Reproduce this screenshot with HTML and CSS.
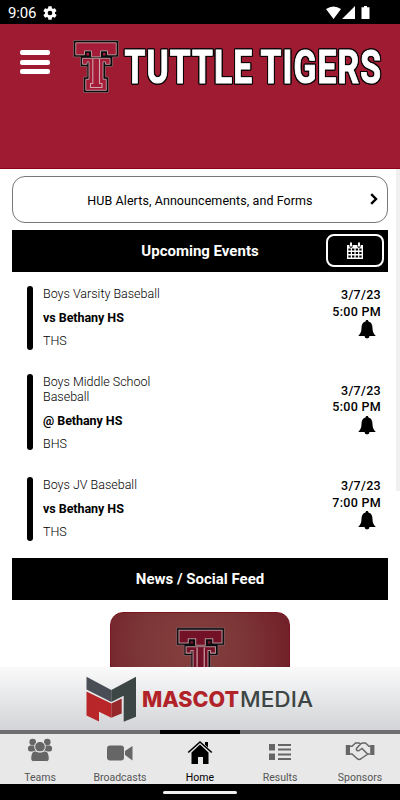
FILE: index.html
```html
<!DOCTYPE html>
<html lang="en">
<head>
<meta charset="utf-8">
<title>Tuttle Tigers</title>
<link rel="stylesheet" href="styles.css">
</head>
<body>
<svg class="defs" width="0" height="0" aria-hidden="true">
  <symbol id="tt" viewBox="0 0 46 53">
    <path d="M.5.5h45v16.500h-6v9.500h-7v10.500h3v15.500h-25v-15.500H14v-10.500H7.500V17h-7z" fill="#080c0e" stroke="#7d5055" stroke-width="1"/>
    <path d="M2.800 2.800h40.400v12h-8.700v-4h-7v6h-9v-6h-7v4H2.800z" fill="currentColor" stroke="#b98f95" stroke-width="1"/>
    <path d="M13.500 13h2.500v2.500h-2.500zM30 13h2.500v2.500H30z" fill="currentColor"/>
    <path d="M9.500 18.300h27.500v6h-4.500v-2.500H30v17.500h3.300v11H12.800v-11H16V21.800h-2v2.500H9.500z" fill="currentColor" stroke="#b98f95" stroke-width="1"/>
    <path d="M19.800 19v24.500H17.500v4h11.500v-4h-2.500V19" fill="currentColor" stroke="#d0a5ac" stroke-width="1.100"/>
  </symbol>
  <symbol id="bell" viewBox="0 0 18 19">
    <path d="M9 0c1 0 1.500.6 1.400 1.500C13.300 2.200 14.500 4.600 14.500 8c0 4 1 5.600 3.300 8H.2C2.500 13.600 3.500 12 3.500 8c0-3.400 1.200-5.800 4.100-6.500C7.500.6 8 0 9 0zM6.500 16h5a2.500 2.500 0 0 1-5 0z"/>
  </symbol>
</svg>

<div class="status">
  <span class="clock">9:06</span>
  <svg class="gear" viewBox="0 0 24 24" width="16" height="16"><path fill="#fff" fill-rule="evenodd" d="M19.400 13a7.500 7.500 0 0 0 0-2l2.100-1.700a.5.5 0 0 0 .1-.6l-2-3.500a.5.5 0 0 0-.6-.2l-2.500 1a7.300 7.300 0 0 0-1.700-1L14.500 2.400a.5.500 0 0 0-.5-.4h-4a.5.5 0 0 0-.5.400L9.100 5a7.700 7.700 0 0 0-1.700 1l-2.500-1a.5.5 0 0 0-.6.200l-2 3.500a.5.5 0 0 0 .1.600L4.500 11a8 8 0 0 0 0 2l-2.100 1.700a.5.5 0 0 0-.1.600l2 3.500c.1.200.4.300.6.200l2.500-1a7.300 7.300 0 0 0 1.700 1l.4 2.600c0 .2.200.4.500.4h4c.2 0 .5-.2.500-.4l.4-2.600a7.700 7.700 0 0 0 1.700-1l2.500 1c.2.100.5 0 .6-.2l2-3.500a.5.5 0 0 0-.1-.6zM12 15.500a3.500 3.500 0 1 1 0-7 3.500 3.500 0 0 1 0 7z"/></svg>
  <svg class="signals" viewBox="0 0 46 14" width="46" height="14" fill="#fff"><path d="M0 3Q7.500-2 15 3L7.500 13zM16 13L29 0v13zM38 0h3v1.200h2.500V13h-8V1.200H38z"/></svg>
</div>

<header class="header">
  <div class="menu"><i></i><i></i><i></i></div>
  <svg class="logo" width="46" height="53"><use href="#tt"/></svg>
  <svg class="wordmark" width="264" height="60" viewBox="0 0 264 60">
    <text x="3.500" y="45.500" textLength="257.500" lengthAdjust="spacingAndGlyphs">TUTTLE TIGERS</text>
  </svg>
</header>

<main class="content">
  <div class="alerts">
    <span>HUB Alerts, Announcements, and Forms</span>
    <svg class="chevron" viewBox="0 0 8 12" width="8" height="12"><path d="M1.200 1.200L6 6l-4.800 4.800" fill="none" stroke="#000" stroke-width="2.400"/></svg>
  </div>

  <section class="bar">
    <h2>Upcoming Events</h2>
    <div class="calendar">
      <svg viewBox="0 0 16 17" width="16" height="17"><path fill="#fff" d="M0 3h16v14H0z"/><path d="M1.400 6.400h2.400v2.200H1.400zm3.600 0h2.400v2.200H5zm3.700 0h2.400v2.200H8.700zm3.600 0h2.300v2.200h-2.300zM1.400 9.900h2.400v2.200H1.400zm3.600 0h2.400v2.200H5zm3.700 0h2.400v2.200H8.700zm3.600 0h2.300v2.200h-2.300zM1.400 13.400h2.400v2.200H1.400zm3.600 0h2.400v2.200H5zm3.700 0h2.400v2.200H8.700zm3.600 0h2.300v2.200h-2.300z"/><path d="M4 1.200v3M12 1.200v3" stroke="#000" stroke-width="3.200" stroke-linecap="round"/><path d="M4 1.200v2.600M12 1.200v2.600" stroke="#fff" stroke-width="2" stroke-linecap="round"/></svg>
    </div>
  </section>

  <section class="events">
    <article class="event">
      <div class="stripe"></div>
      <div class="details"><p>Boys Varsity Baseball</p><p class="match">vs Bethany HS</p><p class="place">THS</p></div>
      <div class="when"><p>3/7/23</p><p>5:00 PM</p><svg width="18" height="19"><use href="#bell"/></svg></div>
    </article>
    <article class="event">
      <div class="stripe tall"></div>
      <div class="details"><p>Boys Middle School Baseball</p><p class="match">@ Bethany HS</p><p class="place">BHS</p></div>
      <div class="when"><p>3/7/23</p><p>5:00 PM</p><svg width="18" height="19"><use href="#bell"/></svg></div>
    </article>
    <article class="event">
      <div class="stripe"></div>
      <div class="details"><p>Boys JV Baseball</p><p class="match">vs Bethany HS</p><p class="place">THS</p></div>
      <div class="when"><p>3/7/23</p><p>7:00 PM</p><svg width="18" height="19"><use href="#bell"/></svg></div>
    </article>
  </section>

  <section class="bar"><h2>News / Social Feed</h2></section>
  <div class="card"><svg width="49" height="57"><use href="#tt"/></svg></div>
  <div class="scrollbar"></div>
</main>

<aside class="ad">
  <svg width="228" height="47" viewBox="0 0 228 47">
    <path d="M.5.7L25.300 14v12L.5 13.500z" fill="#484d56"/>
    <path d="M25.300 14L50 .7v40l-12.300 5V19.700L25.300 26z" fill="#3c4645"/>
    <path d="M.5 15.500L25.300 27.500v14.200L13 35.700V45.500L.5 39.500z" fill="#b9262a"/>
    <path d="M25.300 27.500l10.400-5v15l-10.400 4.200z" fill="#96272a"/>
    <text class="mascot" x="56" y="30.700" textLength="97" lengthAdjust="spacingAndGlyphs">MASCOT</text>
    <text class="media" x="154" y="30.700" textLength="73" lengthAdjust="spacingAndGlyphs">MEDIA</text>
  </svg>
</aside>

<nav class="nav">
  <a class="tab">
    <svg viewBox="0 0 26 24" width="26" height="24"><circle cx="5.700" cy="4" r="3.300"/><circle cx="20.300" cy="4" r="3.300"/><rect x="1" y="7.500" width="9" height="6" rx="2.500"/><rect x="16" y="7.500" width="9" height="6" rx="2.500"/><g stroke="#e8e8e8" stroke-width="1"><circle cx="13" cy="8.700" r="5.300"/><path d="M3.800 20.500c0-5 1.500-7.500 5-7.500 2.500 1.500 5.900 1.500 8.400 0 3.500 0 5 2.500 5 7.500 0 2-1 3-3 3H6.800c-2 0-3-1-3-3z"/></g></svg>
    <span>Teams</span></a>
  <a class="tab">
    <svg viewBox="0 0 26 24" width="26" height="24"><rect x="0" y="7.500" width="17" height="15" rx="3"/><path d="M18 13l7.500-5v14.500L18 17z"/></svg>
    <span>Broadcasts</span></a>
  <a class="tab active">
    <svg viewBox="0 0 26 24" width="26" height="24"><path d="M13 6.500l8.500 8V26h-5.500v-7h-5v7H4.500V14.500zM18 4h3v5.500l-3-2.800z"/><path d="M1.200 14.500L13 4l11.800 10.500" fill="none" stroke="#000" stroke-width="1.600"/></svg>
    <span>Home</span></a>
  <a class="tab">
    <svg viewBox="0 0 26 24" width="26" height="24"><path d="M2 6h6v6.500H2zM2 15.500h6v6.500H2zM11 6h13v2H11zm0 4.500h13v2H11zm0 5h13v2H11zm0 4.500h13v2H11z"/></svg>
    <span>Results</span></a>
  <a class="tab">
    <svg viewBox="0 0 30 24" width="30" height="24"><path d="M.8 7H5v10H.8zm24.400 0h4.200v10h-4.200z"/><path d="M5 8.200h2L10.500 5h3.500l1.500 1 2-1h3L24 8.200h1.200M5 16h2l5 4.500c1.500 1.400 2.800 1.400 4.300 0l2.200-1.500 4.500-3H25M15.500 6l-4 4.500c-1 2 1.800 3 3.300 1.500l2.200-1.500 5.500 5.500" fill="none" stroke="#666" stroke-width="1.500"/></svg>
    <span>Sponsors</span></a>
</nav>
<footer class="gesture"><i></i></footer>
</body>
</html>
```
FILE: styles.css
```css
* { box-sizing: border-box; }
body { margin: 0; width: 400px; height: 800px; overflow: hidden; display: flex; flex-direction: column; background: #fff; color: #000; font-family: Roboto, sans-serif; }
p, h2 { margin: 0; }
.defs { position: absolute; }

.status { flex: none; height: 24px; background: #000; color: #fff; display: flex; align-items: center; padding: 1px 28px 0 8px; }
.clock { font-size: 15px; line-height: 24px; width: 34px; letter-spacing: -.2px; }
.signals { margin-left: auto; }

.header { flex: none; height: 145px; background: #9f1b32; border-bottom: 1px solid #8b0018; display: flex; align-items: flex-start; padding: 16px 0 0 20px; }
.menu { display: flex; flex-direction: column; gap: 4.500px; width: 30px; margin-top: 10px; }
.menu i { height: 5px; border-radius: 2px; background: #fff; }
.logo { color: #a51c38; margin-left: 23px; }
.wordmark { margin-left: 2px; margin-top: -3px; overflow: visible; filter: drop-shadow(1px 0 0 #0b0506) drop-shadow(-1px 0 0 #0b0506) drop-shadow(0 1px 0 #0b0506) drop-shadow(0 -1px 0 #0b0506); }
.wordmark text { font: 700 46px Roboto, sans-serif; fill: #fff; stroke: #fff; stroke-width: 1px; letter-spacing: 1.500px; word-spacing: -2px; }

.content { flex: none; height: 498px; padding: 7px 12px 0; overflow: hidden; position: relative; }
.scrollbar { position: absolute; right: 0; top: 0; width: 4px; height: 322px; background: #f0f0f0; }
.alerts { height: 47px; border: 1px solid #777; border-radius: 13px; display: flex; align-items: center; justify-content: center; position: relative; font-size: 12.500px; padding-top: 1px; }
.alerts span { letter-spacing: .08px; }
.chevron { position: absolute; right: 9px; top: 16px; }
.bar { height: 42px; margin-top: 7px; background: #000; color: #fff; display: grid; place-items: center; position: relative; }
h2 { font-size: 15px; font-weight: 700; }
.calendar { position: absolute; right: 4px; top: 4px; width: 58px; height: 33px; border: 2px solid #fff; border-radius: 8px; display: grid; place-items: center; }

.events { padding: 14px 7px 0 15px; display: flex; flex-direction: column; gap: 24px; height: 279px; }
.event { display: flex; align-items: center; min-height: 64px; }
.event:nth-child(2) { height: 79px; }
.stripe { width: 6px; height: 64px; border-radius: 3px; background: #000; align-self: flex-start; }
.stripe.tall { height: 76px; }
.details { width: 135px; margin-left: 10px; font-size: 12.500px; line-height: 15px; font-weight: 300; align-self: flex-start; }
.match { font-weight: 700; margin-top: 9px; letter-spacing: -.05px; }
.place { margin-top: 8px; }
.when { margin-left: auto; font-size: 12.500px; line-height: 16.500px; font-weight: 500; text-align: right; letter-spacing: .3px; height: 62px; }
.when svg { display: block; margin: 0 5px 0 auto; }

.card { width: 180px; height: 80px; margin: 12px auto 0; border-radius: 13px 13px 0 0; border: 1px solid #79151e; background: radial-gradient(circle at 45% 45%, #843f3e, #7c3637 50%, #701d27); display: flex; justify-content: center; padding-top: 14px; color: #731126; }

.ad { flex: none; height: 63px; background: linear-gradient(#fafafa, #d2d4d7); display: flex; justify-content: center; padding: 9px 0 0 0; }
.mascot, .media { font: 800 21.500px Inter, sans-serif; fill: #b12328; }
.media { font-weight: 500; fill: #3d4645; }

.nav { flex: none; height: 54px; background: #e8e8e8; display: grid; grid-template-columns: repeat(5, 80px); }
.tab { border-top: 4px solid #6e6e6e; display: flex; flex-direction: column; align-items: center; padding-top: 4px; fill: #666; color: #555; font-size: 10.500px; line-height: 13px; }
.tab svg { overflow: visible; }
.tab span { margin-top: 9px; }
.tab.active { border-color: #000; fill: #000; color: #000; }
.gesture { flex: none; height: 16px; background: #000; display: flex; justify-content: center; padding-top: 7px; }
.gesture i { width: 74px; height: 3px; border-radius: 2px; background: #eee; }
```
